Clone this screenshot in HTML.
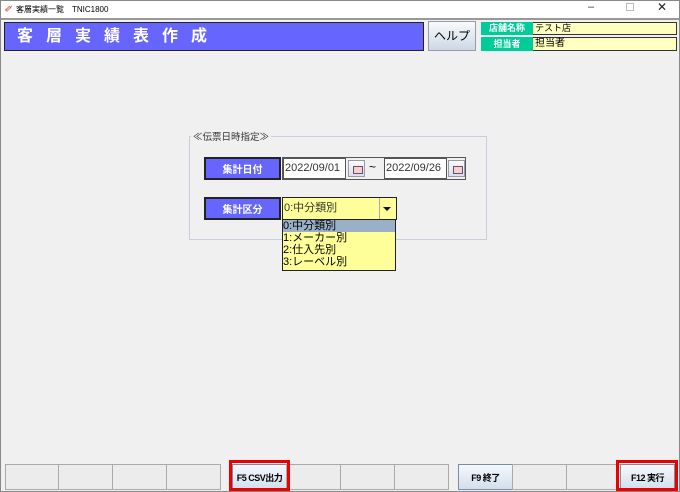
<!DOCTYPE html><html><head><meta charset="utf-8"><style>
*{box-sizing:border-box;margin:0;padding:0}
body{width:680px;height:492px;background:#f0f0f0;font-family:"Liberation Sans","Noto Sans CJK JP",sans-serif;position:relative;overflow:hidden}
.a{position:absolute}
.btn{position:absolute;top:464px;height:26px;border:1px solid #aaa;background:#ececec;font-size:9px;font-weight:bold;display:flex;align-items:center;justify-content:center;white-space:nowrap;letter-spacing:-0.5px}
.btn.on{background:linear-gradient(#f4f8fc,#d2e0ec);border-color:#7a8ea0}
.lbl{position:absolute;background:#6666ff;border:2px solid #222;color:#fff;font-size:10px;font-weight:bold;display:flex;align-items:center;justify-content:center}
.fld{position:absolute;background:#fff;border:1px solid #555;font-size:11px;line-height:19px;padding-left:1px;color:#333;white-space:nowrap}
.cal{position:absolute;width:17px;height:17px;border:1px solid #99a;background:linear-gradient(#fafafa,#dde);}
.cal:after{content:"";position:absolute;left:4px;top:5px;width:8px;height:6px;border:1px solid #557;background:#fcc}
</style></head><body>
<div class="a" style="left:0;top:0;width:680px;height:492px;border:1px solid #888"></div>
<div class="a" style="left:1px;top:1px;width:678px;height:17px;background:#fff;font-size:8px;line-height:17px;padding-left:15px">客層実績一覧　TNIC1800</div>
<div class="a" style="left:4px;top:4px;color:#c22;font-size:9px;font-style:italic">&#x2710;</div>
<div class="a" style="left:588px;top:1px;font-size:11px;color:#333">–</div>
<div class="a" style="left:626px;top:3px;width:8px;height:8px;border:1px solid #bbb"></div>
<div class="a" style="left:657px;top:0;font-size:12px;color:#222">✕</div>
<div class="a" style="left:1px;top:18px;width:678px;height:2px;background:#999"></div>
<div class="a" style="left:4px;top:22px;width:420px;height:29px;background:#6666ff;border:1px solid #222;color:#fff;font-size:16px;font-weight:bold;letter-spacing:13px;line-height:27px;padding-left:12px">客層実績表作成</div>
<div class="a" style="left:428px;top:21px;width:48px;height:30px;border:1px solid #99a;background:linear-gradient(#f8fafc,#cdd8e4);font-size:12px;text-align:center;line-height:28px">ヘルプ</div>
<div class="a" style="left:481px;top:22px;width:196px;height:13px;background:#ffffc0;border:1px solid #333"></div>
<div class="a" style="left:481px;top:22px;width:52px;height:13px;background:#00cc99;color:#fff;font-size:9px;font-weight:bold;text-align:center;line-height:13px;white-space:nowrap">店舗名称</div>
<div class="a" style="left:535px;top:22px;font-size:9px;line-height:13px">テスト店</div>
<div class="a" style="left:481px;top:37px;width:196px;height:14px;background:#ffffc0;border:1px solid #333"></div>
<div class="a" style="left:481px;top:37px;width:52px;height:14px;background:#00cc99;color:#fff;font-size:9px;font-weight:bold;text-align:center;line-height:14px">担当者</div>
<div class="a" style="left:535px;top:37px;font-size:10px;line-height:14px">担当者</div>

<div class="a" style="left:189px;top:136px;width:298px;height:104px;border:1px solid #ccd"></div>
<div class="a" style="left:191px;top:129px;background:#f0f0f0;font-size:9.5px;color:#333;padding:0 2px">≪伝票日時指定≫</div>
<div class="lbl" style="left:204px;top:157px;width:77px;height:23px">集計日付</div>
<div class="fld" style="left:282px;top:157px;width:184px;height:23px;border:1px solid #555;background:#f0f0f0"></div>
<div class="fld" style="left:283px;top:158px;width:63px;height:21px">2022/09/01</div>
<div class="cal" style="left:348px;top:160px"></div>
<div class="a" style="left:369px;top:160px;font-size:12px">~</div>
<div class="fld" style="left:384px;top:158px;width:63px;height:21px">2022/09/26</div>
<div class="cal" style="left:448px;top:160px"></div>
<div class="lbl" style="left:204px;top:197px;width:77px;height:23px">集計区分</div>
<div class="fld" style="left:282px;top:197px;width:115px;height:23px;background:#ffff99;border:1px solid #222;line-height:21px;font-size:11px">0:中分類別</div>
<div class="a" style="left:379px;top:198px;width:17px;height:21px;background:#ffff99;border-left:1px solid #aaa"></div>
<div class="a" style="left:383px;top:207px;border-left:4px solid transparent;border-right:4px solid transparent;border-top:4px solid #111"></div>
<div class="a" style="left:282px;top:219px;width:114px;height:52px;background:#ffff99;border:1px solid #222;font-size:11px;line-height:12px">
<div style="background:#9ab0c8">0:中分類別</div><div>1:メーカー別</div><div>2:仕入先別</div><div>3:レーベル別</div></div>

<div class="btn" style="left:5px;width:54px"></div>
<div class="btn" style="left:58px;width:55px"></div>
<div class="btn" style="left:112px;width:55px"></div>
<div class="btn" style="left:166px;width:55px"></div>
<div class="btn on" style="left:232px;width:55px">F5 CSV出力</div>
<div class="btn" style="left:286px;width:55px"></div>
<div class="btn" style="left:340px;width:55px"></div>
<div class="btn" style="left:394px;width:55px"></div>
<div class="btn on" style="left:458px;width:55px">F9 終了</div>
<div class="btn" style="left:512px;width:55px"></div>
<div class="btn" style="left:566px;width:55px"></div>
<div class="btn on" style="left:620px;width:55px">F12 実行</div>
<div class="a" style="left:229px;top:460px;width:61px;height:31px;border:3px solid #e00"></div>
<div class="a" style="left:616px;top:460px;width:62px;height:31px;border:3px solid #e00"></div>
</body></html>
